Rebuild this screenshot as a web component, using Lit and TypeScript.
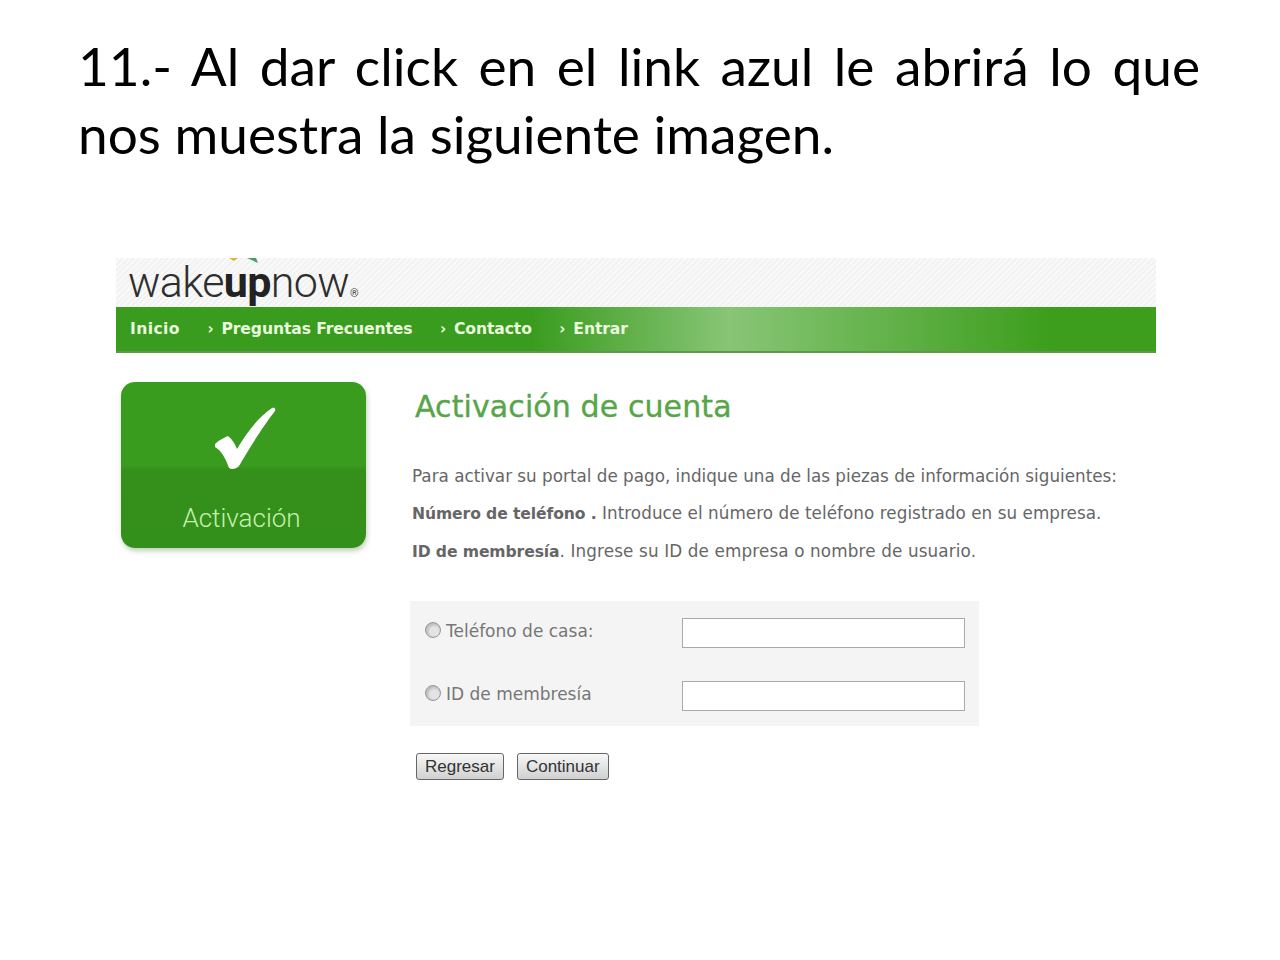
import { LitElement, html, css } from "lit";
import { customElement } from "lit/decorators.js";

@customElement("app-root")
export class AppRoot extends LitElement {
  static styles = css`
    :host { display: block; width: 1280px; height: 960px; background: #fff; overflow: hidden; font-family: "DejaVu Sans", Verdana, sans-serif; }
    .title { padding: 31px 80px 0 78px; font: 400 53.2px/68px Lato, "Open Sans", sans-serif; color: #000; }
    .title .first { text-align: justify; text-align-last: justify; }
    .shot { margin: 91px 124px 0 116px; width: 1040px; }
    .logo { position: relative; height: 49px; box-sizing: border-box; padding: 2px 0 0 12px;
      background: repeating-linear-gradient(135deg, #f2f2f2 0 2px, #f9f9f9 2px 4px);
      font: 300 43px/44px Roboto, "Liberation Sans", sans-serif; color: #2e2e2e; letter-spacing: -0.65px; }
    .logo b { color: #222; font-weight: 700; }
    .logo sup { font-size: 11px; letter-spacing: 0; vertical-align: baseline; color: #444; font-weight: 400; margin-left: 1px; }
    .leaf { position: absolute; left: 112px; top: 0; }
    .nav { height: 46px; display: flex; align-items: center; gap: 27.5px; padding: 0 0 0 14px; box-sizing: border-box;
      background: linear-gradient(90deg, #3a9c1f 0 40%, #88c576 59%, #3c9e1c 90%); border-bottom: 2px solid #5c9a4a;
      color: #e9fbdc; font: 700 15.6px/20px "DejaVu Sans", sans-serif; letter-spacing: -0.1px; }
    .nav .home { letter-spacing: .4px; }
    .nav span i { display: inline-block; width: 14px; font-style: normal; font-size: 15px; }
    .main { display: flex; padding: 29px 0 0 5px; }
    .card { width: 245px; height: 166px; border-radius: 14px; flex: none; display: flex; flex-direction: column; align-items: center;
      background: linear-gradient(180deg, #3a9c1f 0 50%, #358f1b 53%, #33901a 100%);
      box-shadow: 1px 3px 5px rgba(80,120,60,.35); color: #c5f0ae; font: 300 26px/30px Roboto, "Liberation Sans", sans-serif; }
    .card svg { margin-top: 23px; }
    .card div { margin-top: 30px; margin-right: 4px; }
    .content { margin-left: 46px; width: 740px; color: #666; font-size: 16.8px; line-height: 20px; }
    h1 { margin: 7px 0 0 3px; font: 400 30px/36px "DejaVu Sans", sans-serif; -webkit-text-stroke: .35px #57a548; color: #57a548; letter-spacing: .1px; }
    p { margin: 0 0 17px; white-space: nowrap; }
    p:first-of-type { margin-top: 41px; }
    p b { color: #666; font-size: 15.6px; letter-spacing: -.1px; }
    .l2 { letter-spacing: .05px; }
    .l3 { letter-spacing: .14px; }
    .form { margin: 39px 0 0 -2px; width: 569px; height: 125px; background: #f4f4f4; display: grid; grid-template-columns: 272px 283px; grid-template-rows: 63px 62px; align-items: start; }
    .lbl { display: flex; align-items: center; gap: 5px; padding: 20px 0 0 15px; color: #777; line-height: 20px; font-size: 17px; }
    .radio { width: 16px; height: 16px; border-radius: 50%; border: 1px solid #999; box-sizing: border-box; background: radial-gradient(circle at 60% 60%, #e4e4e4 0 35%, #c4c4c4 60%, #aaa 100%); flex: none; margin-top: -3px; }
    .inp { height: 30px; margin-top: 17px; border: 1px solid #aaa; background: #fff; box-sizing: border-box; }
    .btns { display: flex; gap: 13px; padding: 27px 0 0 4px; }
    button { height: 27px; padding: 0 8px; border: 1px solid #666; border-radius: 3px; background: linear-gradient(180deg, #f8f8f8, #d0d0d0); color: #333; font: 400 17px/20px "Liberation Sans", Arial, sans-serif; }
  `;
  render() {
    return html`
      <div class="title"><div class="first">11.- Al dar click en el link azul le abrirá lo que</div><div>nos muestra la siguiente imagen.</div></div>
      <div class="shot">
        <div class="logo">
          <svg class="leaf" width="40" height="6" viewBox="0 0 40 6"><path d="M1 0h9l-4 3z" fill="#e8b030"/><path d="M19 0h9l2 5z" fill="#4d9a6a"/></svg>
          wake<b>up</b>now<sup>®</sup>
        </div>
        <div class="nav">
          <span class="home">Inicio</span><span><i>›</i>Preguntas Frecuentes</span><span><i>›</i>Contacto</span><span><i>›</i>Entrar</span>
        </div>
        <div class="main">
          <div class="card">
            <svg width="64" height="68" viewBox="0 0 64 68"><path d="M3 39 C7 35 12 33 16 31 C20 34 23 39 25 44 C34 29 46 12 60 3 C62 2 64 3 63 6 C52 20 38 42 27 61 C24 64 20 65 17 63 C14 54 9 45 3 42Z" fill="#fff"/></svg>
            <div>Activación</div>
          </div>
          <div class="content">
            <h1>Activación de cuenta</h1>
            <p>Para activar su portal de pago, indique una de las piezas de información siguientes:</p>
            <p class="l2"><b>Número de teléfono .</b> Introduce el número de teléfono registrado en su empresa.</p>
            <p class="l3"><b>ID de membresía</b>. Ingrese su ID de empresa o nombre de usuario.</p>
            <div class="form">
              <div class="lbl"><span class="radio"></span>Teléfono de casa:</div><div class="inp"></div>
              <div class="lbl"><span class="radio"></span>ID de membresía</div><div class="inp"></div>
            </div>
            <div class="btns"><button>Regresar</button><button>Continuar</button></div>
          </div>
        </div>
      </div>
    `;
  }
}
